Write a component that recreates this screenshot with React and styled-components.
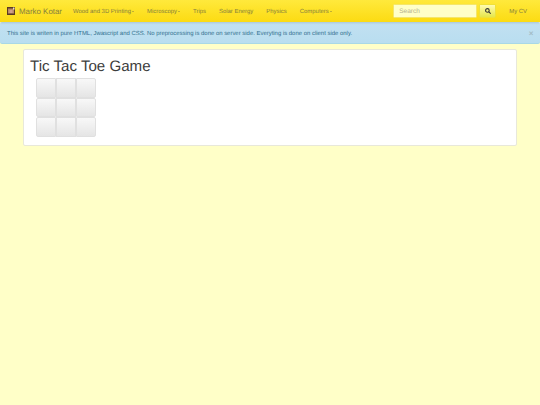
import React from "react";
import styled, { createGlobalStyle } from "styled-components";

const Global = createGlobalStyle`
  html, body { margin: 0; padding: 0; background: #ffffc8; }
  body { font-family: "Liberation Sans", Arial, sans-serif; color: #333; text-rendering: geometricPrecision; }
  #root { min-height: 405px; }
`;
const Navbar = styled.nav`
  height: 22px;
  display: flex;
  align-items: center;
  padding-left: 7px;
  background: linear-gradient(to bottom, #ffe93c, #fcdb12);
  box-shadow: 0 1px 2px rgba(0,0,0,.12);
  position: relative;
  z-index: 1;
`;
const Logo = styled.svg`
  width: 8px;
  height: 8px;
  margin-right: 4px;
  flex: none;
`;
const Brand = styled.a`
  font-size: 7.9px;
  color: #85803f;
  margin-right: 11px;
  white-space: nowrap;
`;
const NavLinks = styled.div`
  display: flex;
  align-items: center;
  gap: 13px;
`;
const NavLink = styled.a`
  font-size: 5.95px;
  color: #85803f;
  white-space: nowrap;
  display: flex;
  align-items: center;
  padding-top: 1px;
`;
const Caret = styled.span`
  width: 0;
  height: 0;
  margin-left: 1px;
  border-top: 1.6px solid #85803f;
  border-left: 1.6px solid transparent;
  border-right: 1.6px solid transparent;
`;
const SearchForm = styled.form`
  display: flex;
  align-items: center;
  gap: 2px;
  margin-left: auto;
`;
const SearchInput = styled.input`
  width: 84px;
  height: 14px;
  box-sizing: border-box;
  border: 1px solid #f5e66a;
  border-radius: 1.5px;
  background: #ffffc8;
  padding: 1px 5px 0;
  font: 6.5px "Liberation Sans", Arial, sans-serif;
  text-rendering: geometricPrecision;
  &::placeholder { color: #b4b08c; opacity: 1; }
`;
const SearchButton = styled.button`
  width: 17px;
  height: 14px;
  padding: 0;
  display: flex;
  align-items: center;
  justify-content: center;
  border: 1px solid #efe13a;
  border-radius: 1.5px;
  background: linear-gradient(to bottom, #fffbb0, #e6e64a);
`;
const CvLink = styled(NavLink)`
  margin: 0 13px;
`;
const Alert = styled.div`
  height: 22px;
  box-sizing: border-box;
  display: flex;
  align-items: center;
  justify-content: space-between;
  padding: 2px 6.5px 0 7px;
  background: linear-gradient(to bottom, #c2e0f1, #b9def0);
  border-bottom: 1px solid #a9d8e6;
  border-radius: 2px;
  font-size: 5.95px;
  color: #31708f;
`;
const Close = styled.span`
  font-size: 8px;
  font-weight: bold;
  color: #a3bcc6;
`;
const Panel = styled.main`
  box-sizing: border-box;
  width: 494px;
  height: 97px;
  margin: 5px 0 0 23px;
  padding: 0 6px;
  background: #fff;
  border: 1px solid #e8e8da;
  border-radius: 2px;
`;
const Title = styled.h1`
  margin: 6.5px 0 1.5px;
  font-size: 15.1px;
  line-height: 20px;
  font-weight: 400;
  color: #3c3c3c;
`;
const Board = styled.div`
  margin-left: 6px;
  display: grid;
  grid-template-columns: repeat(3, 20px);
  grid-auto-rows: 19.6px;
  width: 60px;
`;
const Cell = styled.button`
  padding: 0;
  box-sizing: border-box;
  border: 1px solid #e0e0e0;
  margin-left: ${p => (p.$col === 0 ? 0 : "-0.5px")};
  border-radius: ${p => p.$radius};
  background: linear-gradient(to bottom, #f8f8f8, #e5e5e5);
`;

const radii = ["2px 0 0 2px", "0", "0 2px 2px 0"];

export default function App() {
  return (
    <>
      <Global />
      <Navbar>
        <Logo viewBox="0 0 8 8">
          <rect width="8" height="8" fill="#5a3a22" />
          <rect x="1" y="1.5" width="6" height="5" fill="#b98a68" />
          <rect x="2.5" y="3" width="3" height="3" fill="#d2a08c" />
          <rect x="6" y="0.5" width="1.5" height="2" fill="#e8e0c8" />
        </Logo>
        <Brand>Marko Kotar</Brand>
        <NavLinks>
          <NavLink>Wood and 3D Printing<Caret /></NavLink>
          <NavLink>Microscopy<Caret /></NavLink>
          <NavLink>Trips</NavLink>
          <NavLink>Solar Energy</NavLink>
          <NavLink>Physics</NavLink>
          <NavLink>Computers<Caret /></NavLink>
        </NavLinks>
        <SearchForm onSubmit={e => e.preventDefault()}>
          <SearchInput placeholder="Search" />
          <SearchButton aria-label="Search">
            <svg width="6" height="6" viewBox="0 0 10 10" fill="none" stroke="#333" strokeWidth="1.8">
              <circle cx="4" cy="4" r="3" />
              <path d="M6.2 6.2 L9.5 9.5" />
            </svg>
          </SearchButton>
        </SearchForm>
        <CvLink>My CV</CvLink>
      </Navbar>
      <Alert>
        <span>This site is writen in pure HTML, Jwascript and CSS. No preprocessing is done on server side. Everyting is done on client side only.</span>
        <Close>×</Close>
      </Alert>
      <Panel>
        <Title>Tic Tac Toe Game</Title>
        <Board>
          {[0, 1, 2].flatMap(r =>
            [0, 1, 2].map(c => <Cell key={`${r}-${c}`} $col={c} $radius={radii[c]} aria-label="empty" />)
          )}
        </Board>
      </Panel>
    </>
  );
}
